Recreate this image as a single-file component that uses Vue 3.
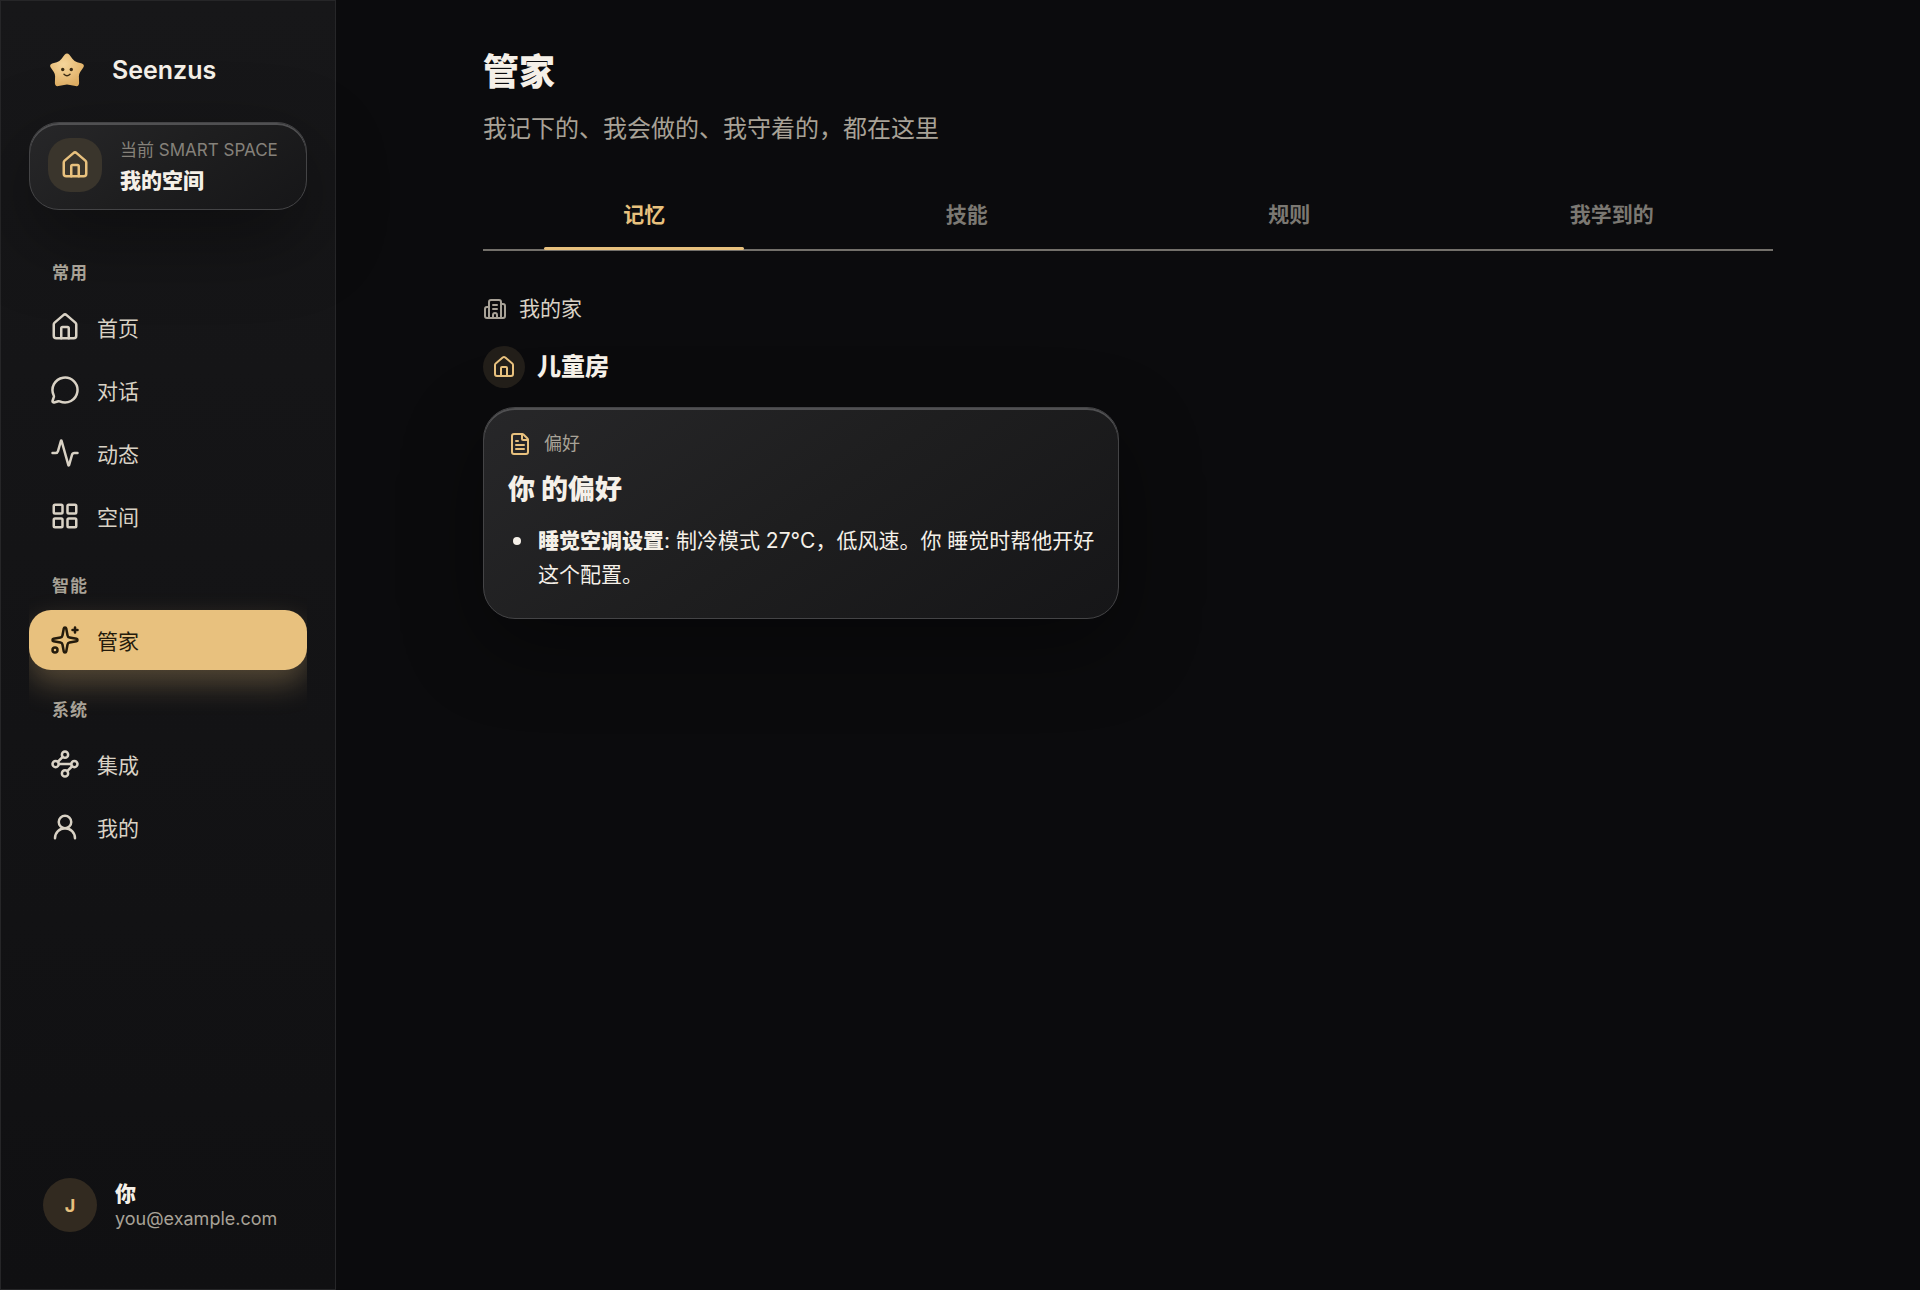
<script setup>
import { ref } from 'vue'

const home = '<path d="M15 21v-8a1 1 0 0 0-1-1h-4a1 1 0 0 0-1 1v8"/><path d="M3 10a2 2 0 0 1 .709-1.528l7-6a2 2 0 0 1 2.582 0l7 6A2 2 0 0 1 21 10v9a2 2 0 0 1-2 2H5a2 2 0 0 1-2-2z"/>'

const groups = [
  {
    title: '常用',
    items: [
      { label: '首页', icon: home },
      { label: '对话', icon: '<path d="M2.992 16.342a2 2 0 0 1 .094 1.167l-1.065 3.29a1 1 0 0 0 1.236 1.168l3.413-.998a2 2 0 0 1 1.099.092 10 10 0 1 0-4.777-4.719"/>' },
      { label: '动态', icon: '<path d="M22 12h-2.48a2 2 0 0 0-1.93 1.46l-2.35 8.36a.25.25 0 0 1-.48 0L9.24 2.18a.25.25 0 0 0-.48 0l-2.35 8.36A2 2 0 0 1 4.49 12H2"/>' },
      { label: '空间', icon: '<rect width="7" height="7" x="3" y="3" rx="1"/><rect width="7" height="7" x="14" y="3" rx="1"/><rect width="7" height="7" x="14" y="14" rx="1"/><rect width="7" height="7" x="3" y="14" rx="1"/>' },
    ],
  },
  {
    title: '智能',
    items: [
      { label: '管家', active: true, icon: '<path d="M11.017 2.814a1 1 0 0 1 1.966 0l1.051 5.558a2 2 0 0 0 1.594 1.594l5.558 1.051a1 1 0 0 1 0 1.966l-5.558 1.051a2 2 0 0 0-1.594 1.594l-1.051 5.558a1 1 0 0 1-1.966 0l-1.051-5.558a2 2 0 0 0-1.594-1.594l-5.558-1.051a1 1 0 0 1 0-1.966l5.558-1.051a2 2 0 0 0 1.594-1.594z"/><path d="M20 2v4"/><path d="M22 4h-4"/><circle cx="4" cy="20" r="2"/>' },
    ],
  },
  {
    title: '系统',
    items: [
      { label: '集成', icon: '<circle cx="12" cy="4.5" r="2.5"/><path d="m10.2 6.3-3.9 3.9"/><circle cx="4.5" cy="12" r="2.5"/><path d="M7 12h10"/><circle cx="19.5" cy="12" r="2.5"/><path d="m13.8 17.7 3.9-3.9"/><circle cx="12" cy="19.5" r="2.5"/>' },
      { label: '我的', icon: '<circle cx="12" cy="8" r="5"/><path d="M20 21a8 8 0 0 0-16 0"/>' },
    ],
  },
]

const tabs = ['记忆', '技能', '规则', '我学到的']
const current = ref('记忆')
</script>

<template>
  <div class="app">
    <aside class="sidebar">
      <div class="brand">
        <svg class="star" viewBox="0 0 34 34" aria-hidden="true">
          <defs>
            <radialGradient id="star-fill" cx="40%" cy="35%" r="70%">
              <stop offset="0" stop-color="#f6d69c" />
              <stop offset="1" stop-color="#dfae62" />
            </radialGradient>
          </defs>
          <path
            fill="url(#star-fill)"
            d="M14.6 1.8Q17-1 19.4 1.8L22.6 6Q24.4 8.3 27.2 9.2L31.9 10.6Q35 11.8 33.3 14.5L30.2 18.9Q28.8 21 28.9 23.5L29.1 30Q29 33.8 25.5 33L20 31.9Q17 31.2 14 31.9L8.5 33Q5 33.8 4.9 30L5.1 23.5Q5.2 21 3.8 18.9L.7 14.5Q-1 11.8 2.1 10.6L6.8 9.2Q9.6 8.3 11.4 6Z"
          />
          <circle cx="12.7" cy="16.5" r="1.7" fill="#3a2b14" />
          <circle cx="21.3" cy="16.5" r="1.7" fill="#3a2b14" />
          <path d="M14 21.3Q17 24.2 20 21.3" fill="none" stroke="#3a2b14" stroke-width="1.4" stroke-linecap="round" />
        </svg>
        <span class="brand-name">Seenzus</span>
      </div>

      <button class="space glass" type="button">
        <span class="space-icon"><svg class="icon i30" viewBox="0 0 24 24" v-html="home" /></span>
        <span class="space-text">
          <span class="space-label">当前 SMART SPACE</span>
          <span class="space-name">我的空间</span>
        </span>
      </button>

      <nav class="nav">
        <section v-for="g in groups" :key="g.title" class="group">
          <h2 class="group-title">{{ g.title }}</h2>
          <a v-for="i in g.items" :key="i.label" href="#" class="nav-item" :class="{ active: i.active }">
            <svg class="icon i30" viewBox="0 0 24 24" v-html="i.icon" />
            <span>{{ i.label }}</span>
          </a>
        </section>
      </nav>

      <div class="user">
        <span class="avatar">J</span>
        <span class="user-text">
          <span class="user-name">你</span>
          <span class="user-mail">you@example.com</span>
        </span>
      </div>
    </aside>

    <main class="main">
      <div class="content">
        <h1>管家</h1>
        <p class="subtitle">我记下的、我会做的、我守着的，都在这里</p>

        <div class="tabs" role="tablist">
          <button
            v-for="t in tabs"
            :key="t"
            type="button"
            role="tab"
            class="tab"
            :class="{ selected: t === current }"
            :aria-selected="t === current"
            @click="current = t"
          >
            {{ t }}
          </button>
        </div>

        <div class="home-row">
          <svg class="icon i24" viewBox="0 0 24 24"><path d="M10 12h4" /><path d="M10 8h4" /><path d="M14 21v-3a2 2 0 0 0-4 0v3" /><path d="M6 10H4a2 2 0 0 0-2 2v7a2 2 0 0 0 2 2h16a2 2 0 0 0 2-2V9a2 2 0 0 0-2-2h-2" /><path d="M6 21V5a2 2 0 0 1 2-2h8a2 2 0 0 1 2 2v16" /></svg>
          <span>我的家</span>
        </div>

        <div class="room-row">
          <span class="room-icon"><svg class="icon i24" viewBox="0 0 24 24" v-html="home" /></span>
          <h2>儿童房</h2>
        </div>

        <article class="card glass">
          <div class="card-kind">
            <svg class="icon i24" viewBox="0 0 24 24"><path d="M6 22a2 2 0 0 1-2-2V4a2 2 0 0 1 2-2h8a2.4 2.4 0 0 1 1.704.706l3.588 3.588A2.4 2.4 0 0 1 20 8v12a2 2 0 0 1-2 2z" /><path d="M14 2v5a1 1 0 0 0 1 1h5" /><path d="M10 9H8" /><path d="M16 13H8" /><path d="M16 17H8" /></svg>
            <span>偏好</span>
          </div>
          <h3>你 的偏好</h3>
          <ul>
            <li><strong>睡觉空调设置</strong>: 制冷模式 27°C，低风速。你 睡觉时帮他开好这个配置。</li>
          </ul>
        </article>
      </div>
    </main>
  </div>
</template>

<style>
html,
body {
  background: #0b0b0d;
}
</style>

<style scoped>
.app {
  display: flex;
  min-height: 100vh;
  background: #0b0b0d;
  color: #f5f0e8;
  font-family: Inter, "Noto Sans CJK SC", sans-serif;
  font-size: 21px;
}
.app * {
  box-sizing: border-box;
}
h1, h2, h3, p, ul {
  margin: 0;
  padding: 0;
}
h1, h2, h3, strong {
  font-weight: 800;
}
button {
  font: inherit;
  color: inherit;
  border: 0;
  background: none;
}
.icon {
  flex: none;
  fill: none;
  stroke: currentColor;
  stroke-width: 2;
  stroke-linecap: round;
  stroke-linejoin: round;
}
.i24 { width: 24px; height: 24px; }
.i30 { width: 30px; height: 30px; }

.sidebar {
  flex: none;
  display: flex;
  flex-direction: column;
  width: 336px;
  padding: 48px 28px 57px;
  border: 1px solid #262628;
  background: linear-gradient(180deg, #171719, #101012);
}
.brand {
  display: flex;
  align-items: center;
  gap: 28px;
  height: 42px;
  padding-left: 21px;
}
.star {
  width: 34px;
  height: 34px;
}
.brand-name {
  font-size: 25px;
  font-weight: 600;
}
.glass {
  border: 1px solid #444446;
  background: linear-gradient(145deg, #272729, #1e1e1f 50%, #161618);
  box-shadow: inset 0 2px 0 #505052, 0 27px 80px rgba(0, 0, 0, 0.4);
}
.space {
  display: flex;
  align-items: center;
  gap: 18px;
  height: 88px;
  margin-top: 31px;
  padding: 0 18px 2px;
  border-radius: 30px;
  text-align: left;
}
.space-icon {
  display: grid;
  place-items: center;
  width: 54px;
  height: 54px;
  border-radius: 22px;
  background: #3a352c;
  color: #e8c17e;
}
.space-text,
.user-text {
  display: flex;
  flex-direction: column;
}
.space-text {
  padding-top: 4px;
}
.space-label {
  font-size: 17px;
  line-height: 28px;
  color: #85817a;
}
.space-name {
  font-weight: 800;
  line-height: 34px;
}
.nav {
  flex: 1;
  margin-top: 49px;
  overflow: hidden;
}
.group {
  display: flex;
  flex-direction: column;
  gap: 3px;
  margin-bottom: 26px;
}
.group-title {
  padding-left: 23px;
  margin-bottom: 7px;
  font-size: 17px;
  font-weight: 700;
  line-height: 28px;
  letter-spacing: 1px;
  color: #a8a297;
}
.nav-item {
  display: flex;
  align-items: center;
  gap: 17px;
  height: 60px;
  padding-left: 21px;
  border-radius: 22px;
  color: #d9d2c5;
  text-decoration: none;
}
.nav-item.active {
  background: #e8c17e;
  color: #241b0c;
  box-shadow: 0 14px 30px rgba(232, 193, 126, 0.3);
}
.user {
  display: flex;
  align-items: center;
  gap: 18px;
  padding-left: 14px;
}
.avatar {
  display: grid;
  place-items: center;
  width: 54px;
  height: 54px;
  border-radius: 50%;
  background: #322a20;
  color: #e8c17e;
  font-size: 18px;
  font-weight: 700;
}
.user-text {
  padding-top: 2px;
}
.user-name {
  font-weight: 800;
  line-height: 26px;
}
.user-mail {
  font-size: 18px;
  line-height: 24px;
  color: #a8a297;
}

.main {
  flex: 1;
  min-width: 0;
  padding: 46px 48px;
}
.content {
  max-width: 1290px;
  margin: 0 auto;
}
h1 {
  font-size: 36px;
  line-height: 52px;
}
.subtitle {
  margin-top: 13px;
  font-size: 24px;
  line-height: 36px;
  color: #a8a297;
}
.tabs {
  display: grid;
  grid-template-columns: repeat(4, 1fr);
  margin-top: 37px;
  border-bottom: 2px solid #73706a;
}
.tab {
  position: relative;
  height: 65px;
  padding: 0 0 7px;
  font-weight: 700;
  color: #7b7872;
  cursor: pointer;
}
.tab.selected {
  color: #e8c17e;
}
.tab.selected::after {
  content: "";
  position: absolute;
  left: 19%;
  right: 19%;
  bottom: -1px;
  height: 3px;
  border-radius: 2px;
  background: #e8c17e;
}
.home-row {
  display: flex;
  align-items: center;
  gap: 12px;
  margin-top: 42px;
  line-height: 32px;
  color: #d9d2c5;
}
.home-row .icon {
  color: #a8a297;
}
.room-row {
  display: flex;
  align-items: center;
  gap: 12px;
  margin-top: 21px;
}
.room-row h2 {
  font-size: 24px;
  line-height: 36px;
}
.room-icon {
  display: grid;
  place-items: center;
  width: 42px;
  height: 42px;
  border-radius: 50%;
  background: #221e19;
  color: #e8c17e;
}
.card {
  max-width: 636px;
  margin-top: 19px;
  padding: 22px 16px 26px 24px;
  border-radius: 32px;
}
.card-kind {
  display: flex;
  align-items: center;
  gap: 12px;
  font-size: 18px;
  line-height: 28px;
  color: #a8a297;
}
.card-kind .icon {
  color: #e8c17e;
}
.card h3 {
  margin-top: 12px;
  font-size: 27px;
  line-height: 40px;
}
.card ul {
  margin-top: 14px;
  list-style: none;
}
.card li {
  position: relative;
  padding-left: 30px;
  line-height: 34px;
}
.card li::before {
  content: "";
  position: absolute;
  top: 13px;
  left: 5px;
  width: 8px;
  height: 8px;
  border-radius: 50%;
  background: currentColor;
}
</style>
